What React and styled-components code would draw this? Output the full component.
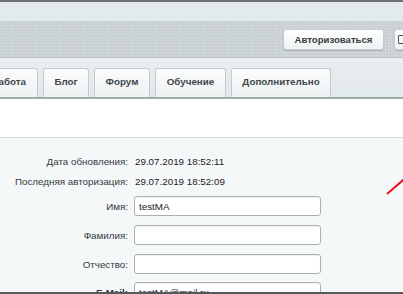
import React from "react";
import styled, { createGlobalStyle } from "styled-components";

const Global = createGlobalStyle`
  html, body { margin: 0; padding: 0; background: #f5f8f9; overflow: hidden; }
  body { font-family: "Liberation Sans", Arial, sans-serif; }
`;

const Page = styled.div`
  position: relative;
  height: 294px;
  box-sizing: border-box;
  border-top: 2px solid #6e7275;
  border-bottom: 2px solid #55595b;
  overflow: hidden;
  display: flex;
  flex-direction: column;
  background: #f5f8f9;
`;

const TopStrip = styled.div`
  height: 19px;
  flex: none;
  background: #e3eaec;
`;

const Toolbar = styled.div`
  height: 37px;
  flex: none;
  box-sizing: border-box;
  display: flex;
  align-items: center;
  justify-content: flex-end;
  gap: 10px;
  background-color: #c9d1d4;
  background-image: radial-gradient(rgba(255, 255, 255, 0.4) 0.7px, transparent 0.9px);
  background-size: 3px 3px;
  border-bottom: 1px solid #b9c2c5;
  overflow: hidden;
`;

const ToolButton = styled.button`
  height: 21px;
  width: ${(p) => p.$w}px;
  flex: none;
  margin-right: ${(p) => p.$mr || 0}px;
  padding: 0;
  border: 1px solid #c4cccf;
  border-radius: 3px;
  background: linear-gradient(#ffffff, #eef2f3);
  box-shadow: 0 1px 1px rgba(0, 0, 0, 0.15);
  font-family: "Liberation Sans", Arial, sans-serif;
  font-size: 9.6px;
  font-weight: bold;
  color: #3a3f41;
  display: flex;
  align-items: center;
  justify-content: ${(p) => (p.$icon ? "flex-start" : "center")};
  padding-left: ${(p) => (p.$icon ? 3 : 0)}px;
`;

const BoxIcon = styled.span`
  width: 7px;
  height: 9px;
  border: 1.5px solid #4a4f52;
  border-radius: 1px;
  box-sizing: border-box;
`;

const TabBar = styled.div`
  height: 41px;
  flex: none;
  box-sizing: border-box;
  background: linear-gradient(#e8eef0, #e2e9eb);
  display: flex;
  align-items: flex-end;
  gap: 5px;
  border-bottom: 2px solid #a2aaad;
  overflow: hidden;
`;

const Tab = styled.div`
  height: 29px;
  width: ${(p) => p.$w}px;
  flex: none;
  margin-left: ${(p) => p.$ml || 0}px;
  box-sizing: border-box;
  padding-bottom: 3px;
  border: 1px solid #c3cbce;
  border-bottom: none;
  border-radius: 3px 3px 0 0;
  background: linear-gradient(#fbfcfc, #eef2f3);
  display: flex;
  align-items: center;
  justify-content: center;
  font-size: 9.8px;
  font-weight: bold;
  color: #40484b;
  white-space: nowrap;
`;

const WhiteArea = styled.div`
  height: 38px;
  flex: none;
  background: #ffffff;
  border-bottom: 1px solid #d8dddf;
`;

const Form = styled.div`
  flex: 1;
  padding-top: 13px;
  background: #f5f8f9;
  display: flex;
  flex-direction: column;
`;

const Row = styled.div`
  display: flex;
  align-items: center;
  gap: 6px;
  height: 20px;
  margin-top: ${(p) => p.$mt || 0}px;
  flex: none;
`;

const Label = styled.div`
  width: 128px;
  flex: none;
  text-align: right;
  font-size: 9.8px;
  color: #333a3c;
  white-space: nowrap;
  font-weight: ${(p) => (p.$bold ? "bold" : "normal")};
`;

const Value = styled.div`
  padding-left: 1px;
  font-size: 9.8px;
  color: #1d2122;
  white-space: nowrap;
`;

const Input = styled.div`
  width: 187px;
  height: 20px;
  flex: none;
  box-sizing: border-box;
  border: 1px solid #a9b1b4;
  border-radius: 3px;
  background: #ffffff;
  box-shadow: inset 0 1px 1px rgba(0, 0, 0, 0.06);
  padding-left: 4px;
  display: flex;
  align-items: center;
  font-size: 9.8px;
  color: #1d2122;
`;

const Annotation = styled.svg`
  position: absolute;
  left: 380px;
  top: 170px;
  width: 30px;
  height: 30px;
`;

const tabs = [
  { t: "Работа", w: 58, ml: -20 },
  { t: "Блог", w: 46 },
  { t: "Форум", w: 56 },
  { t: "Обучение", w: 71 },
  { t: "Дополнительно", w: 100 },
];

export default function App() {
  return (
    <>
      <Global />
      <Page>
        <TopStrip />
        <Toolbar>
          <ToolButton $w={101}>Авторизоваться</ToolButton>
          <ToolButton $w={30} $mr={-21} $icon>
            <BoxIcon />
          </ToolButton>
        </Toolbar>
        <TabBar>
          {tabs.map((tab) => (
            <Tab key={tab.t} $w={tab.w} $ml={tab.ml}>
              {tab.t}
            </Tab>
          ))}
        </TabBar>
        <WhiteArea />
        <Form>
          <Row>
            <Label>Дата обновления:</Label>
            <Value>29.07.2019 18:52:11</Value>
          </Row>
          <Row>
            <Label>Последняя авторизация:</Label>
            <Value>29.07.2019 18:52:09</Value>
          </Row>
          <Row $mt={5}>
            <Label>Имя:</Label>
            <Input>testMA</Input>
          </Row>
          <Row $mt={9}>
            <Label>Фамилия:</Label>
            <Input />
          </Row>
          <Row $mt={9}>
            <Label>Отчество:</Label>
            <Input />
          </Row>
          <Row $mt={8}>
            <Label $bold>E-Mail:</Label>
            <Input>testMA@mail.ru</Input>
          </Row>
        </Form>
        <Annotation viewBox="0 0 30 30">
          <line x1="7" y1="22" x2="30" y2="2" stroke="#e8101a" strokeWidth="2" />
        </Annotation>
      </Page>
    </>
  );
}
